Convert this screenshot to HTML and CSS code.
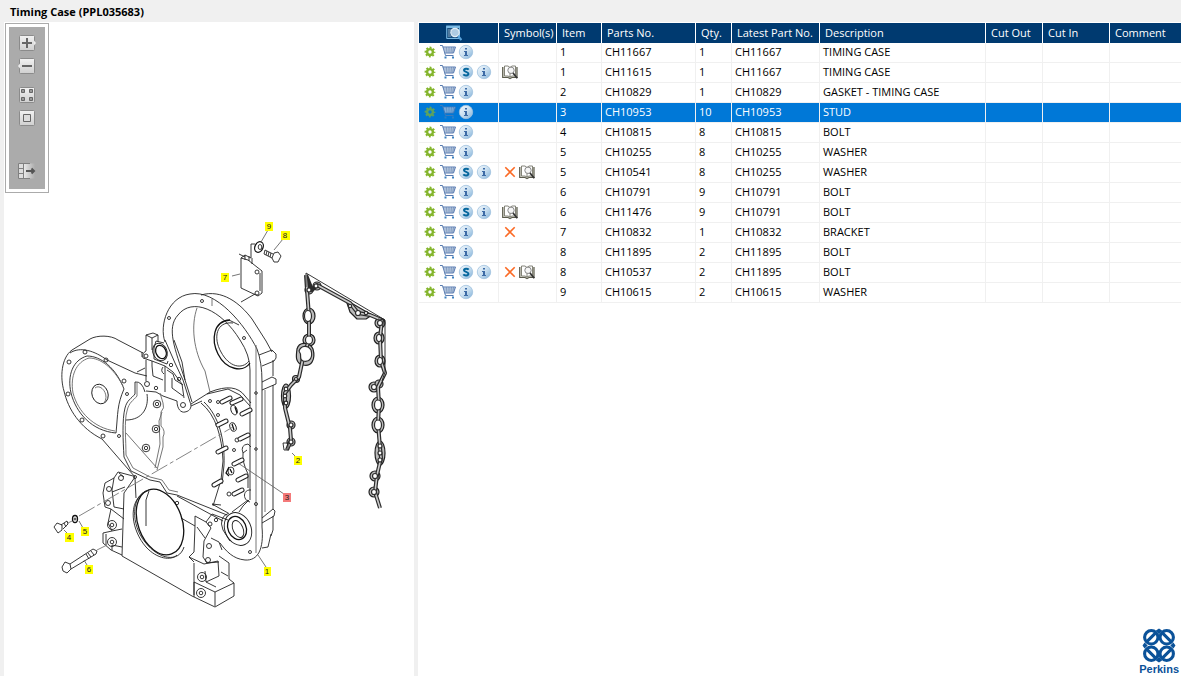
FILE: index.html
```html
<!DOCTYPE html>
<html lang="en">
<head>
<meta charset="utf-8">
<title>Timing Case (PPL035683)</title>
<link rel="stylesheet" href="styles.css">
</head>
<body>
<svg class="sprite" aria-hidden="true">
  <defs>
    <linearGradient id="ball" x1="0" y1="0" x2="1" y2="1"><stop offset="0" stop-color="#f4f9fd"/><stop offset=".5" stop-color="#c9dff0"/><stop offset="1" stop-color="#7fb0d8"/></linearGradient>
    <linearGradient id="key" x1="0" y1="0" x2="0" y2="1"><stop offset="0" stop-color="#f2f2f2"/><stop offset="1" stop-color="#cfcfcf"/></linearGradient>
    <linearGradient id="fade"><stop offset="0" stop-color="#eee"/><stop offset="1" stop-color="#ababab"/></linearGradient>
  </defs>
  <symbol id="gear" viewBox="0 0 16 16"><circle cx="8" cy="8" r="4.500" fill="none" stroke="#84b52c" stroke-width="1.800" stroke-dasharray="1.900 1.634" stroke-dashoffset=".95"/><circle cx="8" cy="8" r="2.900" fill="var(--hole)" stroke="#84b52c" stroke-width="2.400"/></symbol>
  <symbol id="cart" viewBox="0 0 16 16"><path d="M3 3H15.300L13.300 9H5Z" fill="#d3deed"/><path d="M4 5H15M4.400 7H14M6.300 3L7 9M9 3V9M11.500 3L11 9M13.600 3L12.600 9" fill="none" stroke="#7490b8" stroke-width=".7"/><path d="M0 1.500H2.500L5.500 11.500H13.500M2.800 3H15.500L13.500 9H4.600" fill="none" stroke="#587bb0" stroke-width="1"/><path d="M4.500 12.500H6.500V14.500H4.500ZM12 12.500H14V14.500H12Z" fill="#3e82c0"/></symbol>
  <symbol id="info" viewBox="0 0 16 16"><circle cx="8" cy="8" r="6.700" fill="url(#ball)" stroke="#9fc1de" stroke-width=".8"/><path d="M7 4H9V5.500H7ZM6 7H9V11H10V12H6V11H7V8H6Z" fill="#3d6ba6"/></symbol>
  <symbol id="super" viewBox="0 0 16 16"><circle cx="8" cy="8" r="6.700" fill="url(#ball)" stroke="#9fc1de" stroke-width=".8"/><path d="M10.700 5.600C9.500 4.200 6 4.300 6 6.200 6 8.500 10.400 7.300 10.400 9.800 10.400 11.800 6.700 12 5.300 10.400" fill="none" stroke="#06679d" stroke-width="2"/></symbol>
  <symbol id="book" viewBox="0 0 16 16"><path d="M.700 3V13.500H6L8 14.500 10 13.500H15V3" fill="#deded6" stroke="#5b5b4c" stroke-width="1.200"/><path d="M2.500 12V2H6L8 3.500V13L6 12ZM8 3.500L10 2H13.500V12H10L8 13" fill="#fff" stroke="#77776b" stroke-width=".9"/><circle cx="9" cy="6.300" r="3.200" fill="#f6f6f6" stroke="#888" stroke-width="1"/><path d="M11 9L15.300 14.300" stroke="#333" stroke-width="1.700"/></symbol>
  <symbol id="cross" viewBox="0 0 16 16"><path d="M3.300 3.300L12.700 12.700M12.700 3.300L3.300 12.700" stroke="#fb6a25" stroke-width="1.600"/></symbol>
  <symbol id="find" viewBox="0 0 16 16"><path d="M.7 1.500H13.500V13.500H.7Z" fill="#174f80" stroke="#79b9e4"/><path d="M.2 .5H14V3H.2Z" fill="#79b9e4"/><path d="M2.500 5H5M2.500 7H4.500M2.500 9H4.500M2.500 11H5" stroke="#fff" stroke-width="1" stroke-dasharray="1 1"/><circle cx="9" cy="7.500" r="4.200" fill="#aecbe2" stroke="#e2edf5" stroke-width="1.200"/><path d="M12 11L15.500 15" stroke="#5aa4dc" stroke-width="2.200"/></symbol>
</svg>

<header class="titlebar"><h1>Timing Case (PPL035683)</h1></header>
<main class="panes">
<section class="drawing" aria-label="Illustration">
  <div class="toolbar" role="toolbar" aria-label="View">
    <button class="tool" aria-label="Zoom in"><svg viewBox="0 0 18 16"><rect x="1.500" y=".5" width="15" height="15" rx="1" fill="url(#key)" stroke="#8b8b8b"/><path d="M16 5.500L18 8 16 10.500Z" fill="#eee"/><path d="M4 8H14M9 3V13" stroke="#666" stroke-width="2"/></svg></button>
    <button class="tool" aria-label="Zoom out"><svg viewBox="0 0 18 16"><rect x="1.500" y=".5" width="15" height="15" rx="1" fill="url(#key)" stroke="#8b8b8b"/><path d="M2 5.500L0 8 2 10.500Z" fill="#eee"/><path d="M4 8H14" stroke="#666" stroke-width="2"/></svg></button>
    <button class="tool spaced" aria-label="Fit"><svg viewBox="0 0 18 16"><rect x="1.500" y=".5" width="15" height="15" rx="1" fill="url(#key)" stroke="#8b8b8b"/><path d="M3.500 2.500H6.500V5.500H3.500ZM11.500 2.500H14.500V5.500H11.500ZM3.500 10.500H6.500V13.500H3.500ZM11.500 10.500H14.500V13.500H11.500Z" fill="#999" stroke="#666"/></svg></button>
    <button class="tool" aria-label="Actual size"><svg viewBox="0 0 18 16"><rect x="1.500" y=".5" width="15" height="15" rx="1" fill="url(#key)" stroke="#8b8b8b"/><path d="M5.500 4.500H12.500V11.500H5.500Z" fill="#ddd" stroke="#666"/></svg></button>
    <button class="tool last" aria-label="Hide list"><svg viewBox="0 0 18 16"><path d="M5 .5H17V15.500H5Z" fill="url(#fade)"/><path d="M.5 .5H5V15.500H.5Z" fill="#ddd"/><path d="M.5 .5V15.500M5.500 .5V15.500M.5 .5H12M.5 5.500H5M.5 10.500H5M.5 15.500H12" stroke="#808080" fill="none"/><path d="M8 8H16M13.500 5.500L16 8 13.500 10.500" stroke="#555" stroke-width="2" fill="none"/></svg></button>
  </div>
  <svg class="plate" viewBox="4 22 410 654" role="img" aria-label="Exploded view of the timing case">
    <g class="ink">
      <!-- round side cover -->
      <path d="M143 353L118 340C111 335 97 335 90 339L72 350C61 358 60 378 64 391C68 409 80 428 102 439L135 477"/>
      <path d="M70 353C80 346 95 351 107 360L135 373 147 376M142 352V357"/>
      <path d="M116 433C118 413 117 405 124 389C116 368 101 356 87 356C73 360 67 375 71 393C76 413 92 431 116 433Z"/>
      <path class="soft" d="M123 386C113 367 100 358 89 358C76 362 70 376 73 393C78 412 94 428 115 431"/>
      <ellipse cx="100" cy="394" rx="8" ry="10" transform="rotate(-20 100 394)"/>
      <path class="soft" d="M95 388C101 383 110 395 104 403"/>
      <path d="M135 382V394C131 399 127 400 125 408C122 420 123 440 124 457L131 471 150 480 160 482 167 493 177 495 227 515"/>
      <path class="soft" d="M137 383V396C133 401 129 402 127 411C124 421 126 440 126 455L133 468 150 477 162 480 169 490 178 492"/>
      <path d="M135 382Q142 381 145 392M147 394C149 407 143 420 126 420M137 372L145 368"/>
      <path d="M146 391L156 392 163 396 177 401C177 409 181 413 185 412 191 411 192 406 190 402L183 380 175 363 165 340"/>
      <path d="M191 404L210 392M191 406L202 401"/>
      <path class="soft" d="M160 393L163 403Q165 408 161 412V426Q166 431 163 437V447L157 470M162 412L159 421 160 444 155 468M126 433L157 468"/>
      <g><circle cx="85" cy="352" r="2"/><circle cx="69" cy="362" r="2"/><circle cx="106" cy="360" r="2"/><circle cx="68" cy="394" r="2"/><circle cx="82" cy="420" r="2"/><circle cx="103" cy="436" r="2"/><circle cx="119" cy="436" r="1.500"/><circle cx="124" cy="381" r="2"/><circle cx="127" cy="394" r="1.500"/><circle cx="147" cy="384" r="2.500"/><circle cx="156" cy="388" r="1.700"/><circle cx="171" cy="365" r="1.700"/><circle cx="179" cy="379" r="1.700"/><circle cx="183" cy="405" r="2.500"/></g>
      <g><circle cx="157" cy="404" r="3.800"/><circle cx="156" cy="429" r="3.800"/><circle cx="146" cy="448" r="3.800"/><circle cx="157" cy="404" r="1.700"/><circle cx="156" cy="429" r="1.700"/><circle cx="146" cy="448" r="1.700"/></g>
      <!-- upper bracket -->
      <path d="M146 351V335L153 333 158 335V342M146 335L152 338 158 335M152 338V350M146 360V381M164 343L156 341 154 348 154 359 167 364 168 361M146 351Q142 353 143 358L152 361 152 366M152 361L165 366 173 372 182 384 184 398M165 366V392M152 366L153 376 163 380M163 367Q160 371 164 374M167 370L173 374 175 380 183 385M172 378L172 388 183 396"/>
      <circle cx="146" cy="356" r="2"/><ellipse class="bold" cx="161" cy="352" rx="5" ry="7" transform="rotate(-25 161 352)"/><ellipse cx="160" cy="352" rx="7" ry="9" transform="rotate(-25 160 352)"/>
      <!-- main housing rim -->
      <path d="M165 342C159 325 168 297 190 294C216 289 245 325 257 349Q262 362 262 382V527C264 549 258 561 245 560 233 559 226 551 220 543"/>
      <path d="M185 380C175 349 166 328 178 315C192 297 221 309 240 340Q250 355 250 370V500"/>
      <path d="M174 340L182 362 185 380 192 402M201 295C222 289 240 303 252 319L266 341 272 352"/>
      <path d="M259 355L272 350 276 354 276 358 274 361 262 366M273 360V376M262 382L272 377 276 379 276 384 262 390M273 385V509M262 518L273 509 275 511 274 516 262 523M273 516V530L271 536M271 534L268 547 262 548"/>
      <path class="soft" d="M256 345V553M197 308C191 325 193 350 205 371L210 392M265 390V512M212 299V306"/>
      <path class="bold" d="M230 320C213 321 211 340 218 354 226 370 243 373 250 363"/><path d="M233 323C216 321 213 338 221 352 229 367 242 370 249 361M229 320L239 325"/>
      <path d="M210 392Q235 382 245 396L251 403M201 403C216 415 222 437 223 461L221 480 213 506M204 402C219 416 225 440 224 465L222 484M207 394L228 389 240 395 250 406"/>
      <g><circle cx="202" cy="301" r="1.500"/><circle cx="169" cy="318" r="1.500"/><circle cx="244" cy="338" r="1.500"/><circle cx="256" cy="393" r="1.300"/><circle cx="256" cy="449" r="1.300"/><circle cx="256" cy="504" r="1.500"/><circle cx="250" cy="552" r="1.500"/><circle cx="210" cy="401" r="1.500"/><circle cx="218" cy="402" r="1.500"/><circle cx="218" cy="415" r="1.500"/><circle cx="234" cy="450" r="1.500"/><circle cx="229" cy="494" r="2"/><circle cx="216" cy="520" r="1.700"/><circle cx="177" cy="503" r="1.700"/></g>
      <g><ellipse cx="234" cy="410" rx="3" ry="5" transform="rotate(-20 234 410)"/><ellipse cx="233" cy="427" rx="3" ry="4.500" transform="rotate(-20 233 427)"/><circle cx="237" cy="440" r="2"/><ellipse cx="231" cy="471" rx="3" ry="4"/><path class="bold" d="M229 476L226 473 229 467M235 407L237 413M232 424L234 430M230 469L232 473"/></g>
      <path d="M243 453Q240 445 248 444L251 447M247 450L243 453Q242 462 248 474V488M251 490C243 489 242 500 250 502M249 500Q242 506 239 512M232 512L248 500M221 505L212 504 228 513"/>
      <!-- studs -->
      <path class="stud-edge" d="M222 402L230 398M232 403L241 399M242 414L250 410M218 425L226 421M240 439L248 435M218 452L226 448M234 464L242 460M238 480L246 476M234 494L242 490M214 485L221 481"/>
      <path class="stud-core" d="M222 402L230 398M232 403L241 399M242 414L250 410M218 425L226 421M240 439L248 435M218 452L226 448M234 464L242 460M238 480L246 476M234 494L242 490M214 485L221 481"/>
      <!-- base block -->
      <path d="M135 477L124 493 122 556 192 596 215 607 234 596V583L229 579V563L219 556M215 606V592L234 583M215 592L194 582V597M133 476L118 472 114 478 105 483 103 493 105 507 111 509 108 523 112 531 103 533V543L111 550 122 555M114 478L112 490 114 507 124 509M119 473L124 477M135 478L136 498M125 487L112 492M111 509L124 519M112 531L122 529M106 534V545M112 550V545L122 547"/>
      <path d="M177 496L223 521M181 518L195 526 194 552 189 557 194 562M195 526V516L206 522 212 514 228 520M206 522L211 528 204 541 203 557 207 563 219 562M211 538L219 542 222 550M189 557L204 564 218 561M194 563V595M205 571L206 582 216 587M218 561L219 576 206 582M221 572L228 576M197 527L205 538M229 513Q218 517 223 530L230 541"/>
      <ellipse class="bold" cx="160" cy="522" rx="22" ry="34" transform="rotate(-20 160 522)"/>
      <path d="M149 490C130 495 131 525 145 542C159 560 179 563 184 547M146 491C126 502 132 531 146 547 157 559 171 561 177 555M149 491L146 500V526"/>
      <ellipse cx="238" cy="529" rx="13" ry="17" transform="rotate(-24 238 529)"/><ellipse class="bold" cx="237" cy="528" rx="9" ry="12" transform="rotate(-24 237 528)"/><ellipse cx="238" cy="529" rx="5" ry="9" transform="rotate(-24 238 529)"/>
      <g><circle cx="121" cy="478" r="2.500"/><circle cx="109" cy="489" r="2.500"/><circle cx="108" cy="503" r="2.500"/><circle cx="112" cy="525" r="4.500"/><circle cx="112" cy="525" r="1.800"/><circle cx="112" cy="542" r="4.500"/><circle cx="112" cy="542" r="1.800"/><circle cx="135" cy="477" r="1.500"/><circle cx="209" cy="546" r="2.500"/><circle cx="208" cy="560" r="2.500"/><circle cx="202" cy="577" r="4.500"/><circle cx="202" cy="577" r="1.800"/><circle cx="201" cy="593" r="4.500"/><circle cx="201" cy="593" r="1.800"/><circle cx="210" cy="524" r="2"/></g>
      <!-- bracket, washer and bolt -->
      <path d="M241 258V288L258 296 262 293V271L248 260Z"/>
      <path d="M241 258L245 255 251 258V244L255 244M239 254L245 257M249 256V261M245 255V260M252 258V264M260 273V291M241 302L255 294"/>
      <circle cx="257" cy="272" r="2"/><circle cx="257" cy="293" r="2"/>
      <ellipse class="bold" cx="259" cy="247" rx="4" ry="5.500" transform="rotate(25 259 247)"/><ellipse cx="260" cy="247" rx="1.800" ry="2.500"/>
      <path d="M265 250L273 254M264 254L272 258M265 250L264 254M267 251L266 255M269 252L268 256M271 253L270 257M274 253L278 252 281 256 278 262 274 262 272 258Z"/>
      <!-- lower bolts -->
      <path d="M54 527L57 523 62 525 62 530 58 533ZM61 525L67 521 68 524 63 529M64 523L66 527"/>
      <ellipse class="bold" cx="75" cy="519" rx="2.500" ry="3.500"/><circle cx="75" cy="519" r="1"/>
      <path d="M62 567L65 562 70 564 71 569 67 573 63 571ZM70 564L93 549 97 551 96 554 71 569M86 554L89 559M88 553L91 557M91 551L94 555"/>
      <path class="dash" d="M68 523L72 521M79 516L233 427M97 550L107 545"/>
      <path class="soft" d="M268 230L261 242M283 239L274 250M232 276L240 274M238 463L284 494M258 555L266 567M292 453L296 457M64 530L67 533M79 521L83 528M84 560L87 565"/>
      <!-- gasket: dark bosses first, then the band, then the openings -->
      <g class="boss"><ellipse cx="309" cy="316" rx="6" ry="8"/><ellipse cx="309" cy="340" rx="6" ry="6"/><path d="M297 349C299 341 310 342 313 349 316 360 311 367 303 365 295 363 296 356 297 349Z"/><circle cx="309" cy="290" r="4"/><circle cx="317" cy="286" r="4"/><path d="M346 300L372 315 366 319H357L350 312Z"/><circle cx="380" cy="323" r="5"/><ellipse cx="379" cy="338" rx="5" ry="6"/><ellipse cx="380" cy="361" rx="5" ry="6"/><circle cx="374" cy="387" r="5"/><circle cx="379" cy="384" r="4"/><ellipse cx="378" cy="405" rx="6" ry="8"/><ellipse cx="378" cy="425" rx="6" ry="8"/><ellipse cx="380" cy="453" rx="5" ry="12"/><circle cx="375" cy="476" r="5"/><circle cx="374" cy="492" r="5"/><ellipse cx="286" cy="396" rx="4.500" ry="12"/><circle cx="291" cy="425" r="4"/><circle cx="291" cy="442" r="4"/><circle cx="296" cy="379" r="3.500"/></g>
      <path class="gasket-edge" d="M306 275L307 290 309 316 309 340 303 358 299 377 291 385 285 393 285 408 290 428 291 440 287 450M306 275L312 290 317 285 350 303 358 313 370 315 382 320 380 338 381 361 385 373 378 387 379 405 378 424 380 447 381 458 377 475 375 492 380 508"/>
      <path class="gasket-core" d="M306 275L307 290 309 316 309 340 303 358 299 377 291 385 285 393 285 408 290 428 291 440 287 450M317 285L350 303 358 313 370 315 382 320 380 338 381 361 385 373 378 387 379 405 378 424 380 447 381 458 377 475 375 492 380 508"/>
      <path d="M306 273L385 320V372L382 381M306 273V287M385 320L378 319M283 443H288V450H284Z"/>
      <g class="port"><ellipse cx="308" cy="316" rx="3.500" ry="5.500"/><ellipse cx="309" cy="340" rx="3.500" ry="4"/><path d="M299 351C301 345 308 345 311 350 313 357 310 363 303 361 298 360 303 356 299 351Z"/><circle cx="309" cy="290" r="2"/><circle cx="316" cy="286" r="2"/><circle cx="358" cy="313" r="2.500"/><circle cx="350" cy="306" r="1.700"/><circle cx="366" cy="313" r="1.700"/><circle cx="380" cy="323" r="2.500"/><ellipse cx="379" cy="338" rx="2.500" ry="3.500"/><ellipse cx="380" cy="361" rx="2.500" ry="3.500"/><circle cx="374" cy="387" r="2.500"/><ellipse cx="378" cy="405" rx="3.500" ry="5"/><ellipse cx="378" cy="425" rx="3.500" ry="5"/><circle cx="380" cy="446" r="2"/><circle cx="380" cy="453" r="2"/><circle cx="380" cy="460" r="2"/><circle cx="375" cy="476" r="2.500"/><circle cx="374" cy="492" r="2.500"/><circle cx="286" cy="389" r="1.800"/><circle cx="285" cy="396" r="1.800"/><circle cx="286" cy="403" r="1.800"/><circle cx="291" cy="425" r="2"/><circle cx="291" cy="442" r="2"/><circle cx="296" cy="379" r="1.500"/></g>
    </g>
    <g class="tags">
      <path d="M265 222h8v9h-8zM281 231h9v9h-9zM221 273h8v9h-8zM294 456h8v9h-8zM264 567h7v9h-7zM65 533h9v9h-9zM81 527h8v9h-8zM85 565h8v9h-8z" fill="#ff0"/>
      <path d="M283 493h8v9h-8z" fill="#f47a7a"/>
      <text x="269" y="229">9</text><text x="285" y="238">8</text><text x="225" y="280">7</text><text x="298" y="463">2</text><text x="287" y="500">3</text><text x="267" y="574">1</text><text x="69" y="540">4</text><text x="85" y="534">5</text><text x="89" y="572">6</text>
    </g>
  </svg>
</section>
<section class="list" aria-label="Parts list">
<table class="parts">
  <colgroup><col class="c-act"><col class="c-sym"><col class="c-item"><col class="c-part"><col class="c-qty"><col class="c-latest"><col class="c-desc"><col class="c-out"><col class="c-in"><col></colgroup>
  <thead><tr><th class="center" aria-label="Actions"><svg class="icon"><use href="#find"/></svg></th><th>Symbol(s)</th><th>Item</th><th>Parts No.</th><th>Qty.</th><th>Latest Part No.</th><th>Description</th><th>Cut Out</th><th>Cut In</th><th>Comment</th></tr></thead>
  <tbody>
  <tr><td><div class="icons"><svg class="icon"><use href="#gear"/></svg><svg class="icon"><use href="#cart"/></svg><svg class="icon"><use href="#info"/></svg></div></td><td></td><td>1</td><td>CH11667</td><td>1</td><td>CH11667</td><td>TIMING CASE</td><td></td><td></td><td></td></tr>
  <tr><td><div class="icons"><svg class="icon"><use href="#gear"/></svg><svg class="icon"><use href="#cart"/></svg><svg class="icon"><use href="#super"/></svg><svg class="icon"><use href="#info"/></svg></div></td><td><div class="icons tight"><svg class="icon"><use href="#book"/></svg></div></td><td>1</td><td>CH11615</td><td>1</td><td>CH11667</td><td>TIMING CASE</td><td></td><td></td><td></td></tr>
  <tr><td><div class="icons"><svg class="icon"><use href="#gear"/></svg><svg class="icon"><use href="#cart"/></svg><svg class="icon"><use href="#info"/></svg></div></td><td></td><td>2</td><td>CH10829</td><td>1</td><td>CH10829</td><td>GASKET - TIMING CASE</td><td></td><td></td><td></td></tr>
  <tr class="selected" aria-selected="true"><td><div class="icons"><svg class="icon dim"><use href="#gear"/></svg><svg class="icon dim"><use href="#cart"/></svg><svg class="icon"><use href="#info"/></svg></div></td><td></td><td>3</td><td>CH10953</td><td>10</td><td>CH10953</td><td>STUD</td><td></td><td></td><td></td></tr>
  <tr><td><div class="icons"><svg class="icon"><use href="#gear"/></svg><svg class="icon"><use href="#cart"/></svg><svg class="icon"><use href="#info"/></svg></div></td><td></td><td>4</td><td>CH10815</td><td>8</td><td>CH10815</td><td>BOLT</td><td></td><td></td><td></td></tr>
  <tr><td><div class="icons"><svg class="icon"><use href="#gear"/></svg><svg class="icon"><use href="#cart"/></svg><svg class="icon"><use href="#info"/></svg></div></td><td></td><td>5</td><td>CH10255</td><td>8</td><td>CH10255</td><td>WASHER</td><td></td><td></td><td></td></tr>
  <tr><td><div class="icons"><svg class="icon"><use href="#gear"/></svg><svg class="icon"><use href="#cart"/></svg><svg class="icon"><use href="#super"/></svg><svg class="icon"><use href="#info"/></svg></div></td><td><div class="icons tight"><svg class="icon"><use href="#cross"/></svg><svg class="icon"><use href="#book"/></svg></div></td><td>5</td><td>CH10541</td><td>8</td><td>CH10255</td><td>WASHER</td><td></td><td></td><td></td></tr>
  <tr><td><div class="icons"><svg class="icon"><use href="#gear"/></svg><svg class="icon"><use href="#cart"/></svg><svg class="icon"><use href="#info"/></svg></div></td><td></td><td>6</td><td>CH10791</td><td>9</td><td>CH10791</td><td>BOLT</td><td></td><td></td><td></td></tr>
  <tr><td><div class="icons"><svg class="icon"><use href="#gear"/></svg><svg class="icon"><use href="#cart"/></svg><svg class="icon"><use href="#super"/></svg><svg class="icon"><use href="#info"/></svg></div></td><td><div class="icons tight"><svg class="icon"><use href="#book"/></svg></div></td><td>6</td><td>CH11476</td><td>9</td><td>CH10791</td><td>BOLT</td><td></td><td></td><td></td></tr>
  <tr><td><div class="icons"><svg class="icon"><use href="#gear"/></svg><svg class="icon"><use href="#cart"/></svg><svg class="icon"><use href="#info"/></svg></div></td><td><div class="icons tight"><svg class="icon"><use href="#cross"/></svg></div></td><td>7</td><td>CH10832</td><td>1</td><td>CH10832</td><td>BRACKET</td><td></td><td></td><td></td></tr>
  <tr><td><div class="icons"><svg class="icon"><use href="#gear"/></svg><svg class="icon"><use href="#cart"/></svg><svg class="icon"><use href="#info"/></svg></div></td><td></td><td>8</td><td>CH11895</td><td>2</td><td>CH11895</td><td>BOLT</td><td></td><td></td><td></td></tr>
  <tr><td><div class="icons"><svg class="icon"><use href="#gear"/></svg><svg class="icon"><use href="#cart"/></svg><svg class="icon"><use href="#super"/></svg><svg class="icon"><use href="#info"/></svg></div></td><td><div class="icons tight"><svg class="icon"><use href="#cross"/></svg><svg class="icon"><use href="#book"/></svg></div></td><td>8</td><td>CH10537</td><td>2</td><td>CH11895</td><td>BOLT</td><td></td><td></td><td></td></tr>
  <tr><td><div class="icons"><svg class="icon"><use href="#gear"/></svg><svg class="icon"><use href="#cart"/></svg><svg class="icon"><use href="#info"/></svg></div></td><td></td><td>9</td><td>CH10615</td><td>2</td><td>CH10615</td><td>WASHER</td><td></td><td></td><td></td></tr>
  </tbody>
</table>
<div class="brand">
  <svg class="mark" viewBox="0 0 32 34" aria-hidden="true"><g fill="none" stroke="#0b5299" stroke-width="3"><circle cx="8.500" cy="9" r="6.500"/><circle cx="23.500" cy="9" r="6.500"/><circle cx="8.500" cy="25" r="6.500"/><circle cx="23.500" cy="25" r="6.500"/><path d="M4 13.500L13 4.500M28 13.500L19 4.500M4 20.500L13 29.500M28 20.500L19 29.500"/></g><path d="M13 2.500L16 .5 19 2.500 16 6ZM13 31.500L16 33.500 19 31.500 16 28ZM2 14L0 17 2 20 5 17ZM30 14L32 17 30 20 27 17Z" fill="#0b5299"/></svg>
  <span class="brand-name">Perkins</span>
</div>
</section>
</main>
</body>
</html>
```
FILE: styles.css
```css
* { box-sizing: border-box; }
body {
  margin: 0;
  min-height: 100vh;
  display: flex;
  flex-direction: column;
  background: #f0f0f0;
  color: #000;
  font: 11px/16px "Open Sans", "Noto Sans", sans-serif;
}
.sprite { position: absolute; width: 0; height: 0; }
.titlebar { padding: 4px 10px 2px; }
.titlebar h1 { margin: 0; font-size: 11px; line-height: 16px; font-weight: 700; }
.panes {
  flex: 1;
  display: grid;
  grid-template-columns: 410px minmax(0, 1fr);
  gap: 4px;
  padding-left: 4px;
}
.drawing { position: relative; background: #fff; }
.plate { display: block; width: 100%; }
.toolbar {
  position: absolute;
  top: 1px;
  left: 1px;
  width: 44px;
  padding: 11px 0 13px;
  display: flex;
  flex-direction: column;
  align-items: center;
  gap: 7px;
  background: #ababab;
  border: 1px solid #ababab;
  box-shadow: inset 0 0 0 3px #fff;
}
.tool { display: block; width: 18px; height: 16px; padding: 0; border: 0; background: none; }
.tool svg { display: block; width: 18px; height: 16px; }
.spaced { margin-top: 6px; }
.last { margin-top: 30px; }

.ink { fill: none; stroke: #222; stroke-width: 0.9; stroke-linejoin: round; }
.soft { stroke: #666; }
.bold { stroke: #111; stroke-width: 1.3; }
.dash { stroke: #777; stroke-dasharray: 18 3 4 3; }
.stud-edge { stroke: #222; stroke-width: 5; stroke-linecap: round; }
.stud-core { stroke: #fff; stroke-width: 3; stroke-linecap: round; }
.boss { fill: #bbb; stroke: #222; stroke-width: 1.2; }
.gasket-edge { stroke: #2c2c2c; stroke-width: 4; }
.gasket-core { stroke: #ccc; stroke-width: 1.6; }
.port { fill: #fff; stroke: #2c2c2c; stroke-width: 1.2; }
.tags { font: 8px "Liberation Sans", Arial, sans-serif; text-anchor: middle; fill: #222; }

.list { background: #fff; padding: 1px 0 0 1px; display: flex; flex-direction: column; }
.parts { width: 100%; table-layout: fixed; border-collapse: separate; border-spacing: 0; }
.c-act { width: 80px; }
.c-sym { width: 58px; }
.c-item { width: 45px; }
.c-part { width: 94px; }
.c-qty { width: 36px; }
.c-latest { width: 88px; }
.c-desc { width: 166px; }
.c-out { width: 57px; }
.c-in { width: 67px; }
.parts th, .parts td {
  height: 20px;
  text-align: left;
  white-space: nowrap;
  font-weight: 400;
  line-height: 16px;
  vertical-align: middle;
}
.parts th { padding: 0 0 0 5px; background: #003a70; color: #fff; border-right: 1px solid #fff; }
.parts th.center { padding: 0 0 0 27px; }
.parts td { padding: 0 0 2px 3px; border-right: 1px solid #f0f0f0; border-bottom: 1px solid #f0f0f0; }
.parts th:last-child, .parts td:last-child { border-right: 0; }
.parts .selected td { background: #0078d7; color: #fff; }
.icons { display: flex; gap: 2px; }
.tight { gap: 1px; }
.icon { display: block; width: 16px; height: 16px; --hole: #fff; }
.selected .icon { --hole: #0078d7; }
.dim { opacity: 0.7; }

.brand { margin: auto 2px 0 0; align-self: flex-end; display: flex; flex-direction: column; align-items: center; }
.mark { width: 34px; height: 35px; }
.brand-name { color: #0b5299; font: bold 11px/13px "Liberation Sans", Arial, sans-serif; }
```
